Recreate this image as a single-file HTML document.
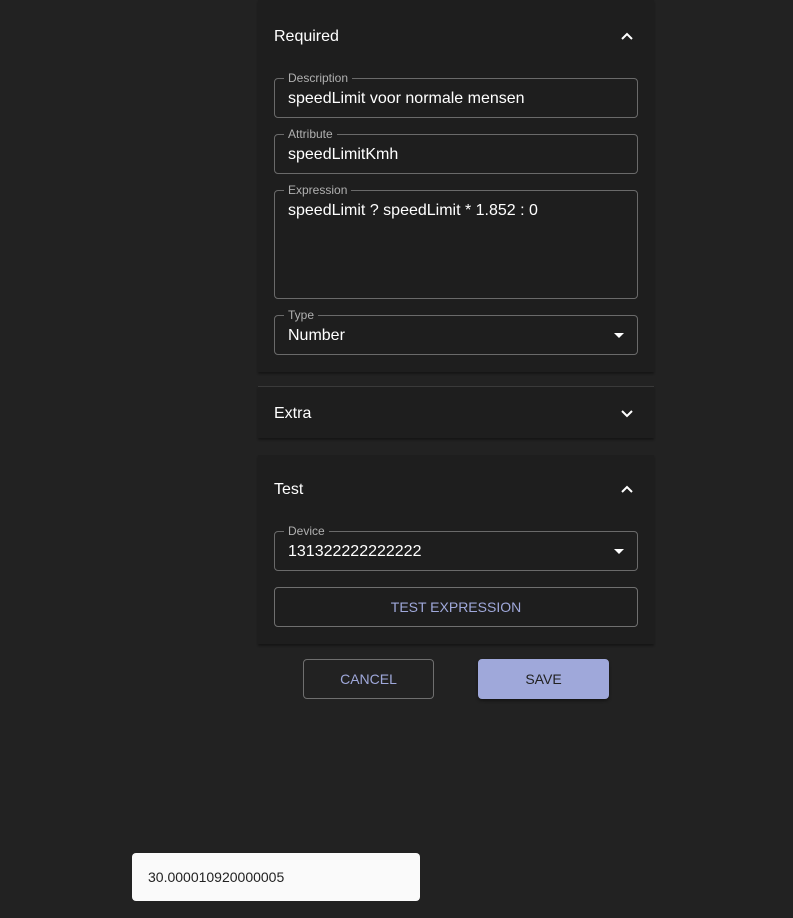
<!DOCTYPE html>
<html><head><style>
*{box-sizing:border-box;margin:0;padding:0}
body{width:793px;height:918px;background:#222222;font-family:"Liberation Sans",sans-serif;position:relative;overflow:hidden;color:#fff}
.panel{position:absolute;left:258px;width:396px;background:#1e1e1e;box-shadow:0 2px 2px rgba(0,0,0,.35)}
.hdr{position:absolute;left:16px;font-size:16px;color:#fff}
.chev{position:absolute;right:20px;width:14px;height:14px}
.field{position:absolute;left:16px;width:364px;border:1px solid #6a6a6a;border-radius:4px}
.lbl{position:absolute;left:9px;top:-8px;font-size:12px;color:#b0b0b0;background:#1e1e1e;padding:0 4px}
.val{position:absolute;left:13px;top:11px;font-size:16px;color:#fff}
.arrow{position:absolute;right:13px;top:17px;width:0;height:0;border-left:5px solid transparent;border-right:5px solid transparent;border-top:5px solid #fff}
.btn{position:absolute;border:1px solid #6f6f6f;border-radius:4px;font-size:14px;color:#9fa8da;text-align:center;line-height:38px}
</style></head><body>
<div class="panel" style="top:0;height:372px">
 <div class="hdr" style="top:28px">Required</div>
 <svg class="chev" style="top:29px" viewBox="0 0 14 14"><path d="M2 10 L7 5 L12 10" stroke="#fff" stroke-width="2" fill="none"/></svg>
 <div class="field" style="top:78px;height:40px"><span class="lbl">Description</span><span class="val">speedLimit voor normale mensen</span></div>
 <div class="field" style="top:134px;height:40px"><span class="lbl">Attribute</span><span class="val">speedLimitKmh</span></div>
 <div class="field" style="top:190px;height:109px"><span class="lbl">Expression</span><span class="val">speedLimit ? speedLimit * 1.852 : 0</span></div>
 <div class="field" style="top:315px;height:40px"><span class="lbl">Type</span><span class="val">Number</span><span class="arrow"></span></div>
</div>
<div class="panel" style="top:386px;height:52px;border-top:1px solid #3a3a3a">
 <div class="hdr" style="top:18px">Extra</div>
 <svg class="chev" style="top:19px" viewBox="0 0 14 14"><path d="M2 5 L7 10 L12 5" stroke="#fff" stroke-width="2" fill="none"/></svg>
</div>
<div class="panel" style="top:455px;height:189px">
 <div class="hdr" style="top:26px">Test</div>
 <svg class="chev" style="top:27px" viewBox="0 0 14 14"><path d="M2 10 L7 5 L12 10" stroke="#fff" stroke-width="2" fill="none"/></svg>
 <div class="field" style="top:76px;height:40px"><span class="lbl">Device</span><span class="val">131322222222222</span><span class="arrow"></span></div>
 <div class="btn" style="left:16px;top:132px;width:364px;height:40px">TEST EXPRESSION</div>
</div>
<div class="btn" style="left:303px;top:659px;width:131px;height:40px">CANCEL</div>
<div class="btn" style="left:478px;top:659px;width:131px;height:40px;background:#9fa8da;border-color:#9fa8da;color:#222;box-shadow:0 2px 3px rgba(0,0,0,.4)">SAVE</div>
<div style="position:absolute;left:132px;top:853px;width:288px;height:48px;background:#fafafa;border-radius:4px;color:#222;font-size:14px;padding:17px 16px;line-height:14px">30.000010920000005</div>
</body></html>
